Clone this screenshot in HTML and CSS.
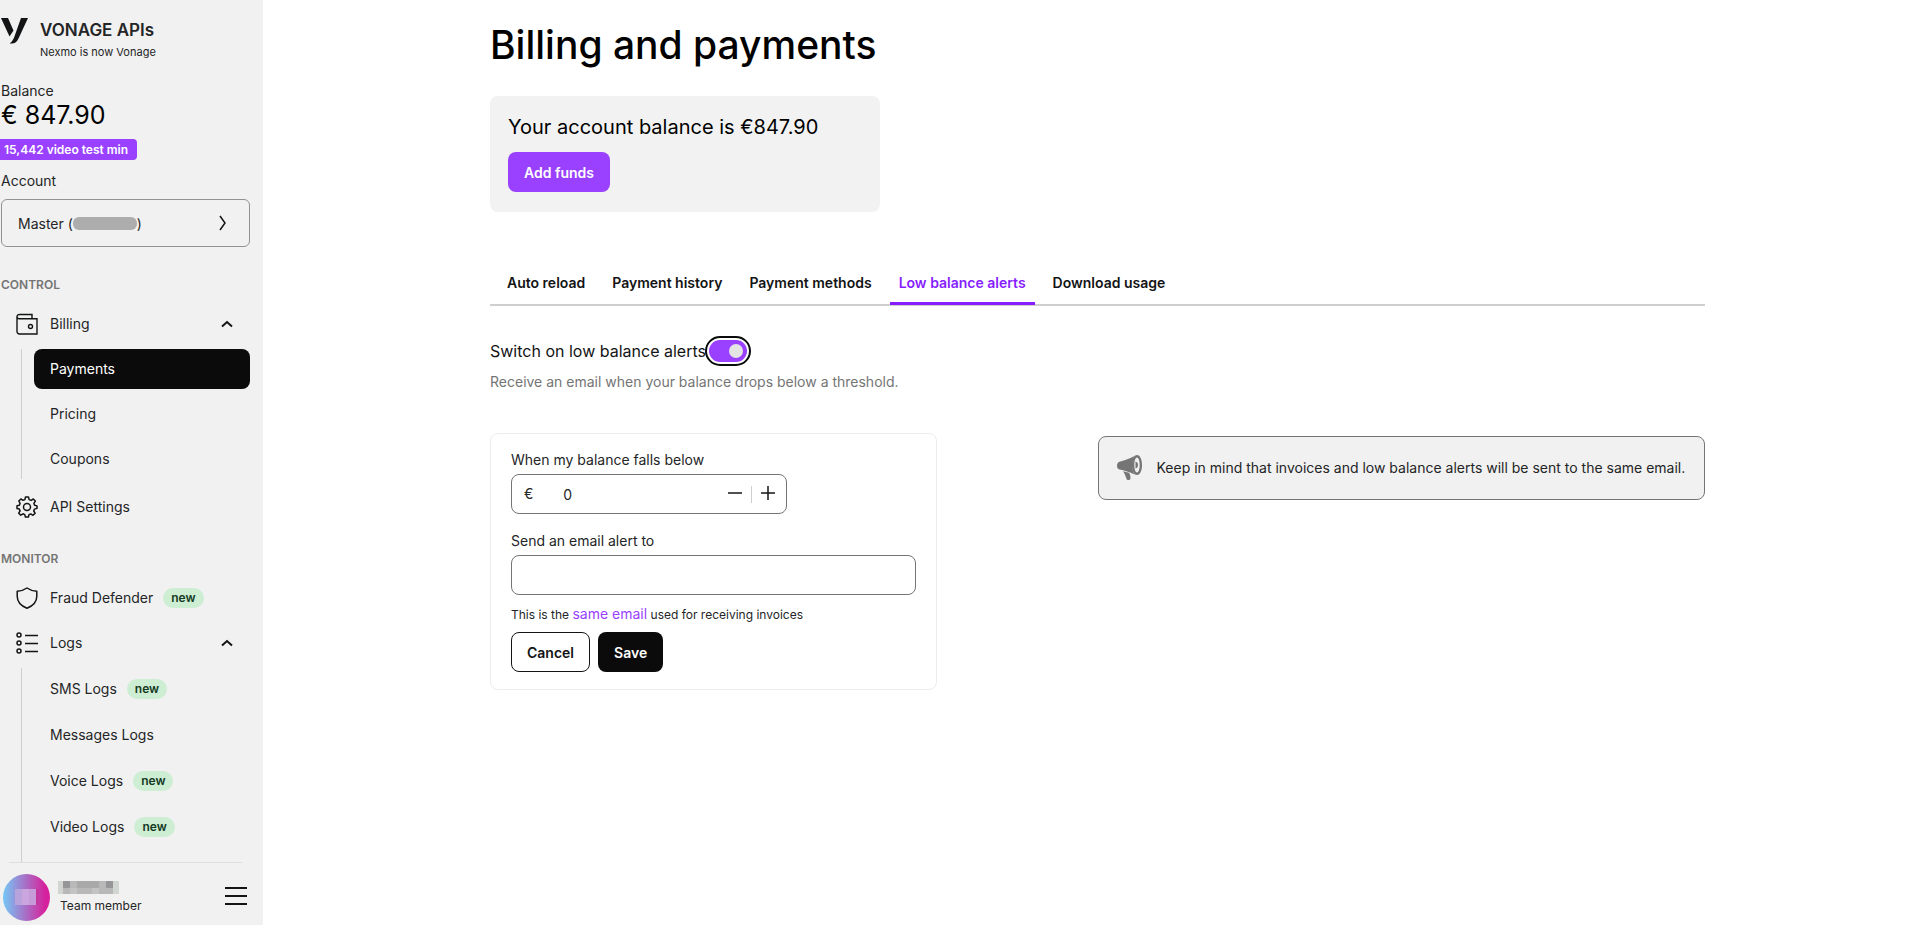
FILE: index.html
```
<!DOCTYPE html>
<html lang="en">

<head>
    <meta charset="UTF-8">
    <meta name="viewport" content="width=device-width, initial-scale=1.0">
    <title>Billing and payments</title>
    <link rel="stylesheet" href="styles.css">
</head>

<body>

    <aside class="sidebar">
        <div class="brand">
            <svg class="brand-logo" width="28" height="26" viewBox="0 0 28 26" fill="#131415">
                <path d="M0 0h7l5.5 12.5L8.500 18.500z" />
                <path d="M20 0h7L17.500 20.500C15.500 24.500 14 25.500 10 25.500c-.6 0-1-.1-1.300-.2 2.200-1.300 3.300-3.300 4.300-5.500z" />
            </svg>
            <div>
                <div class="brand-name">VONAGE APIs</div>
                <div class="brand-sub">Nexmo is now Vonage</div>
            </div>
        </div>

        <div class="balance">
            <div class="side-label">Balance</div>
            <div class="balance-value">€ 847.90</div>
            <span class="minutes">15,442 video test min</span>
        </div>

        <div class="account">
            <div class="side-label">Account</div>
            <button type="button" class="account-btn">
                <span class="account-name">Master (<span class="masked"></span>)</span>
                <svg width="8" height="16" viewBox="0 0 8 16" fill="none" stroke="#131415" stroke-width="1.500">
                    <path d="M1 1l5 7-5 7" />
                </svg>
            </button>
        </div>

        <nav class="menu">
            <h2 class="menu-title">CONTROL</h2>
            <a href="#" class="menu-item">
                <svg class="menu-icon" viewBox="0 0 22 22" fill="none" stroke="#131415" stroke-width="1.400">
                    <path d="M16 5V1.500H3.500C2 1.500 1 2.300 1 3.500S2 5.700 3.500 5.700H21V21H3.500C2 21 1 20 1 18.500V3.500" />
                    <circle cx="14.500" cy="13.500" r="2" />
                </svg>
                <span>Billing</span>
                <svg class="chevron" viewBox="0 0 12 8" fill="none" stroke="#131415" stroke-width="2">
                    <path d="M1 6.500L6 2l5 4.500" />
                </svg>
            </a>
            <ul class="submenu">
                <li><a href="#" class="active">Payments</a></li>
                <li><a href="#">Pricing</a></li>
                <li><a href="#">Coupons</a></li>
            </ul>
            <a href="#" class="menu-item settings">
                <svg class="menu-icon" viewBox="0 0 22 22" fill="none" stroke="#131415" stroke-width="1.500" stroke-linejoin="round">
                    <path d="M9.500 1h3l.6 2.600 1.900.8L17.300 3l2 2.100-1.400 2.300.7 1.800 2.400.7v2.500l-2.500.7-.8 1.900 1.400 2.200-2.100 2.100-2.200-1.400-1.800.8-.6 2.300h-3l-.6-2.400-1.800-.8L4.800 19.200l-2.100-2.100 1.400-2.200-.8-1.800L1 12.500V9.800l2.400-.6.7-1.900L2.800 5l2.100-2 2.200 1.300 1.800-.7z" />
                    <circle cx="11" cy="11" r="3.500" />
                </svg>
                <span>API Settings</span>
            </a>

            <h2 class="menu-title">MONITOR</h2>
            <a href="#" class="menu-item">
                <svg class="menu-icon" viewBox="0 0 22 22" fill="none" stroke="#131415" stroke-width="1.500" stroke-linejoin="round">
                    <path d="M11 1C8.200 3 5 4 1.200 4.200v5c0 5.600 3.600 9.500 9.800 12 6.200-2.500 9.800-6.400 9.800-12v-5C17 4 13.800 3 11 1z" />
                </svg>
                <span>Fraud Defender</span>
                <span class="tag">new</span>
            </a>
            <a href="#" class="menu-item">
                <svg class="menu-icon" viewBox="0 0 22 22" fill="none" stroke="#131415" stroke-width="1.500">
                    <circle cx="3" cy="3" r="2" />
                    <circle cx="3" cy="11" r="2" />
                    <circle cx="3" cy="19" r="2" />
                    <path d="M9 3.500h13M9 11.500h13M9 19.500h13" />
                </svg>
                <span>Logs</span>
                <svg class="chevron" viewBox="0 0 12 8" fill="none" stroke="#131415" stroke-width="2">
                    <path d="M1 6.500L6 2l5 4.500" />
                </svg>
            </a>
            <ul class="submenu logs">
                <li><a href="#">SMS Logs <span class="tag">new</span></a></li>
                <li><a href="#">Messages Logs</a></li>
                <li><a href="#">Voice Logs <span class="tag">new</span></a></li>
                <li><a href="#">Video Logs <span class="tag">new</span></a></li>
            </ul>
        </nav>

        <div class="user">
            <div class="avatar">
                <svg width="24" height="16" viewBox="0 0 24 16">
                    <path fill="#b9a3dc" d="M0 0h7v16H0z" />
                    <path fill="#cba6de" d="M7 0h7v16H7z" />
                    <path fill="#c69bd8" d="M14 0h7v16h-7z" />
                    <path fill="#c4379f" d="M21 0h3v16h-3z" />
                </svg>
            </div>
            <div class="user-info">
                <svg width="61" height="13" viewBox="0 0 61 13">
                    <path fill="#b8b8b8" d="M0 0h61v13H0z" />
                    <path fill="#d2d6d2" d="M0 0h5v13H0zM55 0h6v13h-6z" />
                    <path fill="#969698" d="M5 0h7v7H5zM48 0h7v7h-7z" />
                    <path fill="#a9a9a9" d="M19 0h22v7H19z" />
                    <path fill="#c3c3c3" d="M12 7h7v6h-7zM34 7h7v6h-7z" />
                </svg>
                <div class="role">Team member</div>
            </div>
            <button type="button" class="burger" aria-label="Menu">
                <svg width="22" height="20" viewBox="0 0 22 20" stroke="#131415" stroke-width="2">
                    <path d="M0 2h22M0 10h22M0 18h22" />
                </svg>
            </button>
        </div>
    </aside>

    <main class="content">
        <h1>Billing and payments</h1>

        <section class="funds">
            <p class="funds-text">Your account balance is €847.90</p>
            <button type="button" class="btn btn-purple">Add funds</button>
        </section>

        <nav class="tabs">
            <a href="#">Auto reload</a>
            <a href="#">Payment history</a>
            <a href="#">Payment methods</a>
            <a href="#" class="active">Low balance alerts</a>
            <a href="#">Download usage</a>
        </nav>

        <div class="switch-row">
            <label for="alerts">Switch on low balance alerts</label>
            <input type="checkbox" id="alerts" class="switch" checked>
        </div>
        <p class="hint">Receive an email when your balance drops below a threshold.</p>

        <div class="columns">
            <form class="alert-form">
                <label for="threshold">When my balance falls below</label>
                <div class="number-field">
                    <span>€</span>
                    <input type="text" id="threshold" inputmode="numeric" value="0">
                    <button type="button" aria-label="Decrease">
                        <svg width="14" height="14" viewBox="0 0 14 14" stroke="#131415" stroke-width="1.500"><path d="M0 7h14" /></svg>
                    </button>
                    <button type="button" class="plus" aria-label="Increase">
                        <svg width="14" height="14" viewBox="0 0 14 14" stroke="#131415" stroke-width="1.500"><path d="M0 7h14M7 0v14" /></svg>
                    </button>
                </div>

                <label for="email">Send an email alert to</label>
                <input type="email" id="email" class="text-field">

                <p class="helper">This is the <a href="#">same email</a> used for receiving invoices</p>

                <div class="actions">
                    <button type="button" class="btn btn-outline">Cancel</button>
                    <button type="submit" class="btn btn-black">Save</button>
                </div>
            </form>

            <div class="notice">
                <svg width="26" height="26" viewBox="0 0 26 26" fill="#757575">
                    <path d="M17.500 1C12 4 7 5.500 2.500 6.700.8 7.200 0 8.800 0 10.700s.8 3.500 2.500 3.800c5 .9 10 2.500 15 5-3-4.500-3-14 0-18.500z" />
                    <path fill-rule="evenodd" d="M20 0c3.200 0 5 4.500 5 10s-1.800 10-5 10-5-4.500-5-10 1.800-10 5-10zm0 2.500c-1.500 0-2.700 3-2.700 7.500s1.200 7.500 2.700 7.500 2.700-3 2.700-7.500-1.200-7.500-2.700-7.500z" />
                    <path d="M18.500 6.500c1.700.3 2.500 1.800 2.500 3.500s-.8 3.200-2.500 3.500z" />
                    <path d="M6 16.200l6 1.500c1.300 2 1.800 4.300 1.300 6.300-.3 1.300-3 1.500-3.600.2C8.500 21 7.800 18.500 6 16.200z" />
                </svg>
                <p>Keep in mind that invoices and low balance alerts will be sent to the same email.</p>
            </div>
        </div>
    </main>

</body>

</html>
```

FILE: styles.css
```
* {
    margin: 0;
    padding: 0;
    box-sizing: border-box;
    font-family: 'Inter', 'Liberation Sans', sans-serif;
}

body {
    display: flex;
    height: 100vh;
    background: #fff;
    color: #242526;
    font-size: 14px;
    line-height: 20px;
}

a {
    color: inherit;
    text-decoration: none;
}

ul {
    list-style: none;
}

/* Sidebar */
.sidebar {
    display: flex;
    flex-direction: column;
    flex: none;
    width: 263px;
    height: 100vh;
    padding: 18px 13px 0 1px;
    background: #f1f1f1;
    overflow: hidden;
}

.brand {
    display: flex;
    gap: 11px;
}

.brand-name {
    padding-top: 2px;
    font-size: 17px;
    font-weight: 600;
}

.brand-sub {
    padding-top: 2px;
    font-size: 11px;
}

.balance {
    padding-top: 19px;
}

.balance-value {
    color: #000;
    font-size: 25px;
    line-height: 28px;
}

.minutes {
    display: inline-block;
    margin: 10px 0 0 -1px;
    padding: 0 9px 0 4px;
    border-radius: 0 4px 4px 0;
    background: #9941ff;
    color: #fff;
    font-size: 12px;
    font-weight: 600;
    line-height: 21px;
}

.account {
    padding-top: 11px;
}

.account-btn {
    display: flex;
    align-items: center;
    justify-content: space-between;
    width: 100%;
    height: 48px;
    margin-top: 8px;
    padding: 0 22px 0 16px;
    border: 1px solid #929292;
    border-radius: 6px;
    background: transparent;
    color: inherit;
    font-size: 14px;
    cursor: pointer;
}

.account-name {
    display: flex;
    align-items: center;
}

.masked {
    width: 64px;
    height: 13px;
    border-radius: 6px;
    background: #adadad;
}

.menu {
    display: flex;
    flex-direction: column;
    flex: 1;
    min-height: 0;
    padding-top: 28px;
}

.menu-title {
    margin-bottom: 9px;
    color: #757575;
    font-size: 12px;
    font-weight: 600;
    line-height: 20px;
}

.menu-item {
    display: flex;
    align-items: center;
    flex: none;
    height: 40px;
    margin-bottom: 5px;
    padding: 0 17px 0 15px;
}

.menu-icon {
    width: 22px;
    height: 22px;
    margin-right: 12px;
}

.chevron {
    width: 12px;
    height: 8px;
    margin-left: auto;
}

.tag {
    margin-left: 10px;
    padding: 0 8px;
    border-radius: 10px;
    background: #cdeed3;
    color: #14391f;
    font-size: 12px;
    font-weight: 600;
    line-height: 20px;
}

.submenu {
    display: flex;
    flex-direction: column;
    gap: 5px;
    margin-left: 20px;
    padding-left: 12px;
    border-left: 1px solid #cfcfcf;
}

.submenu a {
    display: flex;
    align-items: center;
    height: 40px;
    padding-left: 16px;
    border-radius: 8px;
}

.submenu .active {
    background: #0b0b0b;
    color: #fff;
}

.settings {
    margin: 8px 0 22px;
}

.logs {
    flex: 1;
    gap: 6px;
    padding-top: 1px;
}

.user {
    display: flex;
    align-items: center;
    height: 63px;
    margin: 0 8px;
    border-top: 1px solid #dedede;
}

.avatar {
    display: flex;
    align-items: center;
    justify-content: center;
    width: 47px;
    height: 47px;
    margin: 6px 8px 0 -6px;
    border-radius: 50%;
    background: linear-gradient(90deg, #74c8f6, #d6219c 90%);
}

.user-info {
    padding-top: 9px;
}

.user-info svg {
    display: block;
    margin-bottom: 2px;
}

.role {
    padding-left: 2px;
    font-size: 12px;
}

.burger {
    margin: 4px -5px 0 auto;
    border: none;
    background: none;
    line-height: 0;
    cursor: pointer;
}

/* Content */
.content {
    flex: 1;
    padding: 20px 212px 0 227px;
}

h1 {
    color: #000;
    font-size: 39px;
    font-weight: 500;
    line-height: 50px;
}

.funds {
    width: 390px;
    height: 116px;
    margin-top: 26px;
    padding: 18px;
    border-radius: 8px;
    background: #f2f2f2;
}

.funds-text {
    margin-bottom: 11px;
    color: #000;
    font-size: 20px;
    line-height: 27px;
}

.btn {
    height: 40px;
    padding: 0 15px;
    border: 1px solid transparent;
    border-radius: 8px;
    font-size: 14px;
    font-weight: 600;
    cursor: pointer;
}

.btn-purple {
    background: #9941ff;
    color: #fff;
}

.btn-outline {
    border-color: #131415;
    background: #fff;
    color: #131415;
}

.btn-black {
    background: #0b0b0b;
    color: #fff;
}

.tabs {
    display: flex;
    gap: 9px;
    margin-top: 51px;
    padding-left: 8px;
    border-bottom: 2px solid #cfcfcf;
    color: #131415;
}

.tabs a {
    margin-bottom: -1px;
    padding: 0 9px;
    border-bottom: 3px solid transparent;
    font-weight: 600;
    line-height: 39px;
}

.tabs .active {
    border-color: #871eff;
    color: #871eff;
}

.switch-row {
    display: flex;
    align-items: center;
    height: 40px;
    margin-top: 25px;
    color: #131415;
    font-size: 16px;
}

.switch {
    appearance: none;
    width: 38px;
    height: 22px;
    margin-left: 3px;
    padding: 4px;
    border-radius: 11px;
    outline: 2px solid #0b0b0b;
    outline-offset: 2px;
    background: #9941ff;
    cursor: pointer;
}

.switch::before {
    content: "";
    display: block;
    width: 14px;
    height: 14px;
    border-radius: 50%;
    background: #e4e4e4;
}

.switch:checked::before {
    margin-left: auto;
}

.hint {
    margin-top: 1px;
    color: #757575;
}

.columns {
    display: grid;
    grid-template-columns: 1fr 1fr;
    align-items: start;
    padding-top: 41px;
}

.alert-form {
    width: 447px;
    padding: 16px 20px 17px;
    border: 1px solid #ededed;
    border-radius: 8px;
}

.alert-form label {
    display: block;
    margin-bottom: 4px;
}

.number-field {
    display: flex;
    align-items: center;
    width: 276px;
    height: 40px;
    margin-bottom: 17px;
    padding-left: 12px;
    border: 1px solid #757575;
    border-radius: 8px;
}

.number-field input {
    flex: 1;
    min-width: 0;
    margin-left: 30px;
    border: none;
    outline: none;
    background: none;
    color: inherit;
    font-size: 14px;
}

.number-field button {
    padding: 0 9px;
    border: none;
    background: none;
    line-height: 16px;
    cursor: pointer;
}

.number-field .plus {
    padding-right: 11px;
    border-left: 1px solid #cfcfcf;
}

.text-field {
    display: block;
    width: 100%;
    height: 40px;
    padding: 0 12px;
    border: 1px solid #757575;
    border-radius: 8px;
    font-size: 14px;
}

.helper {
    margin: 9px 0 7px;
    font-size: 12px;
}

.helper a {
    color: #9941ff;
    font-size: 14px;
}

.actions {
    display: flex;
    gap: 8px;
}

.notice {
    display: flex;
    align-items: center;
    gap: 14px;
    min-height: 64px;
    margin-top: 3px;
    padding: 0 8px 0 18px;
    border: 1px solid #757575;
    border-radius: 8px;
    background: #f1f1f1;
}

.notice svg {
    flex: none;
}
```
